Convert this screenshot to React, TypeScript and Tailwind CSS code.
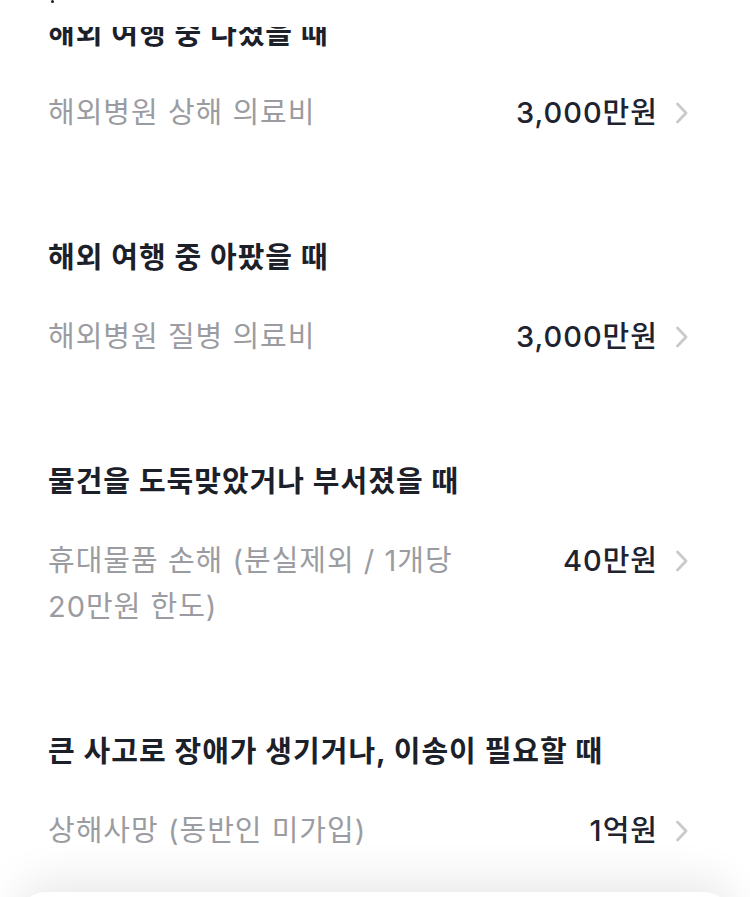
import React from 'react';

type Item = {
  title: string;
  label: string;
  value: string;
};

const items: Item[] = [
  { title: '해외 여행 중 다쳤을 때', label: '해외병원 상해 의료비', value: '3,000만원' },
  { title: '해외 여행 중 아팠을 때', label: '해외병원 질병 의료비', value: '3,000만원' },
  { title: '물건을 도둑맞았거나 부서졌을 때', label: '휴대물품 손해 (분실제외 / 1개당 20만원 한도)', value: '40만원' },
  { title: '큰 사고로 장애가 생기거나, 이송이 필요할 때', label: '상해사망 (동반인 미가입)', value: '1억원' },
];

function Chevron() {
  return (
    <svg width="16" height="22" viewBox="0 0 16 22" fill="none" className="shrink-0">
      <path d="M3.5 2L12 11L3.5 20" stroke="#c9cacd" strokeWidth="2.8" strokeLinecap="round" strokeLinejoin="round" />
    </svg>
  );
}

function Section({ item, first }: { item: Item; first: boolean }) {
  return (
    <div className={first ? '' : 'mt-[102px]'}>
      <h3 className="text-[29px] leading-[40px] font-bold text-[#1c2029] tracking-[1px]">{item.title}</h3>
      <div className="mt-[36px] flex items-start justify-between">
        <p className="max-w-[420px] break-keep text-[29px] leading-[46px] text-[#9b9ca1] tracking-[1px]">{item.label}</p>
        <div className="flex items-center gap-[16px] h-[46px]">
          <span className="text-[29px] leading-[46px] font-medium text-[#1f2330] tracking-[1px]">{item.value}</span>
          <Chevron />
        </div>
      </div>
    </div>
  );
}

export default function App() {
  return (
    <div
      className="relative w-full h-[897px] overflow-hidden bg-white"
      style={{ fontFamily: 'Inter, "Noto Sans CJK KR", sans-serif' }}
    >
      {/* sticky header edge covering the scrolled content */}
      <div className="absolute top-0 left-0 right-0 h-[27px] bg-white z-10">
        <div className="ml-[51px] w-[3px] h-[3px] bg-[#1c2029] rounded-full" />
      </div>

      <div className="pl-[48px] pr-[60px] pt-[14px]">
        {items.map((item, i) => (
          <Section key={i} item={item} first={i === 0} />
        ))}
      </div>

      <div className="mx-[18px] mt-[38px] h-[120px] rounded-t-[28px] bg-white shadow-[0_-12px_44px_rgba(0,0,0,0.09)]" />
    </div>
  );
}
